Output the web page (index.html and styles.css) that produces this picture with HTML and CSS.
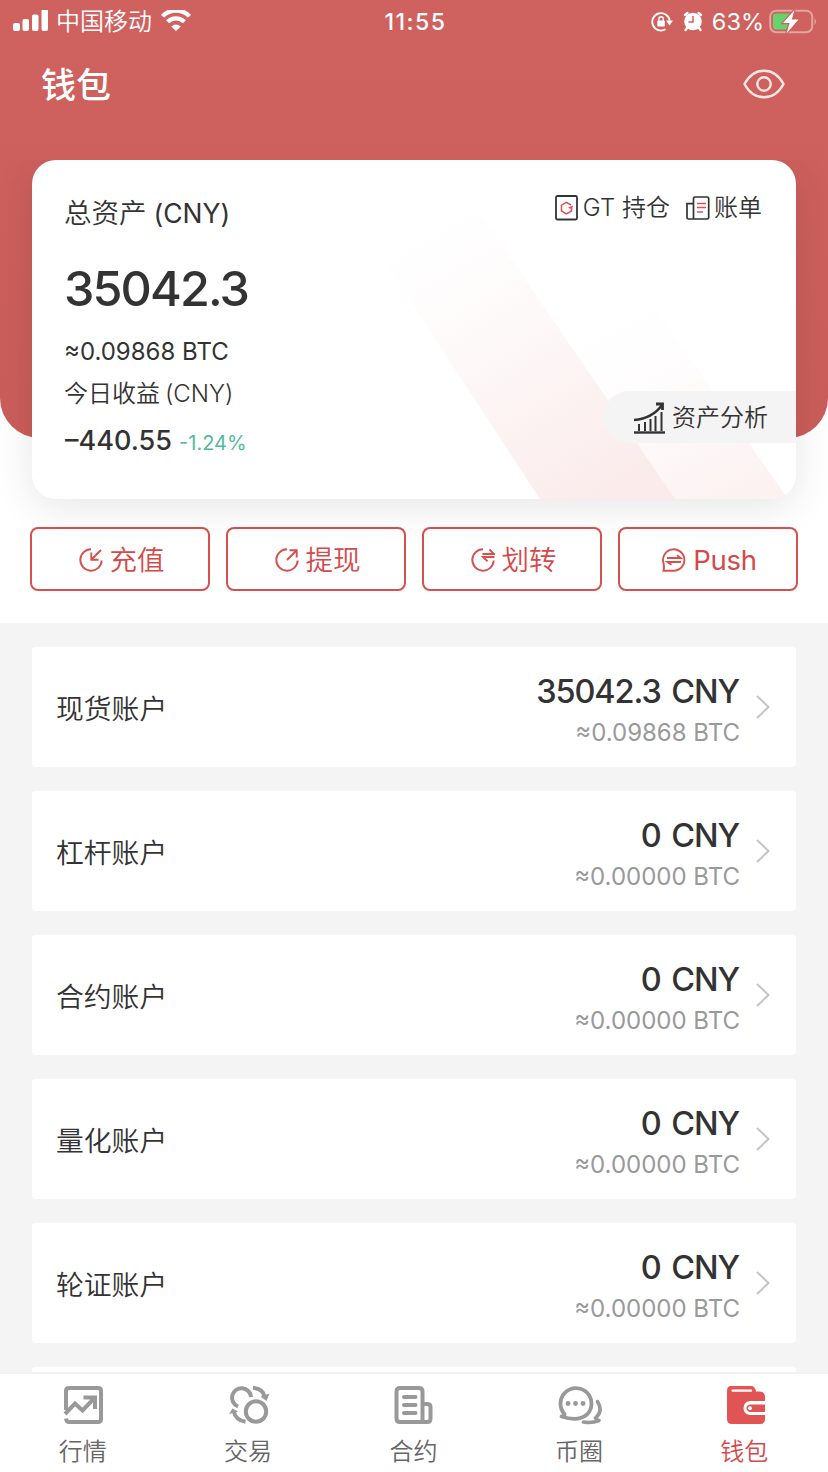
FILE: index.html
```html
<!DOCTYPE html>
<html lang="zh-CN">
<head>
  <meta charset="UTF-8">
  <meta name="viewport" content="width=device-width, initial-scale=1.0">
  <title>钱包</title>
  <link rel="stylesheet" href="styles.css">
</head>
<body>
  <header class="hero">
    <div class="status-bar">
      <div class="status-left">
        <svg width="35" height="23" viewBox="0 0 35 23" fill="#fff">
          <rect x="0" y="13" width="7" height="8" rx="2"/>
          <rect x="9.5" y="9" width="6.5" height="12" rx="2"/>
          <rect x="19" y="4.500" width="6.500" height="16.500" rx="2"/>
          <rect x="28.500" y="-1" width="6.500" height="22" rx="2"/>
        </svg>
        <span class="carrier">中国移动</span>
        <svg width="32" height="23" viewBox="0 0 32 23" fill="none" stroke="#fff" stroke-width="4.400">
          <path d="M2.500 6.200A19 19 0 0 1 29.500 6.200"/>
          <path d="M7.600 11.800A12 12 0 0 1 24.400 11.800"/>
          <path d="M16 21L11.200 16.500Q16 12.700 20.800 16.500Z" fill="#fff" stroke="none"/>
        </svg>
      </div>
      <div class="clock">11:55</div>
      <div class="status-right">
        <svg class="lock" width="22" height="22" viewBox="0 0 22 22" fill="none" stroke="#fff" stroke-width="1.900">
          <path d="M14.500 18.300A8.700 8.700 0 1 1 18.600 9.500"/>
          <path d="M15 9.500H22L18.500 14.500Z" fill="#fff" stroke="none"/>
          <rect x="6.300" y="9.500" width="7.600" height="6" rx="1" fill="#fff" stroke="none"/>
          <path d="M7.900 10V8a2.200 2.200 0 0 1 4.400 0v2" stroke-width="1.400"/>
        </svg>
        <svg class="alarm" width="20" height="21" viewBox="0 0 20 21">
          <circle cx="10" cy="10.500" r="8.800" fill="#fff"/>
          <path d="M2 4L4.500 2M18 4L15.500 2M4 17L2.500 19M16 17L17.500 19" stroke="#fff" stroke-width="2.400" stroke-linecap="round"/>
          <path d="M10 5V11H5.500" fill="none" stroke="#cf605d" stroke-width="1.500"/>
        </svg>
        <span class="percent">63%</span>
        <svg width="49" height="26" viewBox="0 0 49 26">
          <rect x="1.200" y="1.700" width="42" height="21.600" rx="6" fill="none" stroke="#e5a3a1" stroke-width="2"/>
          <path d="M45.500 9q3 3.500 0 7z" fill="#e5a3a1"/>
          <path d="M7 4.500H25L17 20.500H7Q4 20.500 4 17.500V7.500Q4 4.500 7 4.500Z" fill="#65d46c"/>
          <path d="M25.500 1L14 14H20.500L17.500 24.500L29.500 10.500H22.800Z" fill="#fff" stroke="#cf605d" stroke-width="2.400" paint-order="stroke"/>
        </svg>
      </div>
    </div>
    <div class="title-bar">
      <h1>钱包</h1>
      <svg width="42" height="30" viewBox="0 0 42 30" fill="none" stroke="#fbe6e4" stroke-width="2.400">
        <path d="M1.500 15C6 6.500 13 1.700 21 1.700S36 6.500 40.500 15C36 23.500 29 28.300 21 28.300S6 23.500 1.500 15Z"/>
        <circle cx="21" cy="15" r="6.700"/>
      </svg>
    </div>
  </header>

  <main>
    <section class="card">
      <svg class="card-stripes" width="764" height="339" viewBox="0 0 764 339">
        <defs>
          <linearGradient id="stripe-a" gradientUnits="userSpaceOnUse" x1="400" y1="60" x2="570" y2="339">
            <stop offset="0" stop-color="#e05a5a" stop-opacity="0"/>
            <stop offset=".3" stop-color="#e05a5a" stop-opacity=".025"/>
            <stop offset="1" stop-color="#dc5a5a" stop-opacity=".12"/>
          </linearGradient>
          <linearGradient id="stripe-b" gradientUnits="userSpaceOnUse" x1="590" y1="140" x2="700" y2="339">
            <stop offset="0" stop-color="#e05a5a" stop-opacity="0"/>
            <stop offset=".4" stop-color="#e05a5a" stop-opacity=".015"/>
            <stop offset="1" stop-color="#dc5a5a" stop-opacity=".08"/>
          </linearGradient>
        </defs>
        <path d="M508 339L320 52L430 26L643 339Z" fill="url(#stripe-a)"/>
        <path d="M643 339L500 129L600 115L756 339Z" fill="url(#stripe-b)"/>
      </svg>
      <div class="card-info">
        <div class="label">总资产<span>(CNY)</span></div>
        <div class="total">35042.3</div>
        <div class="btc">≈0.09868 BTC</div>
        <div class="today">今日收益<span>(CNY)</span></div>
        <div class="profit">–440.55 <span class="down">-1.24%</span></div>
      </div>
      <div class="card-side">
        <div class="links">
          <a class="link">
            <svg width="24" height="26" viewBox="0 0 24 26" fill="none">
              <rect x="1" y="1" width="21" height="23.500" rx="1.500" stroke="#333" stroke-width="1.800"/>
              <path d="M16 10L11.500 7.300L6.500 10.200V16L11.500 19L16.500 16V13" stroke="#e0525a" stroke-width="1.500"/>
              <path d="M13 12.500L18 10.500L17 14.500Z" fill="#e0525a"/>
            </svg>
            <span>GT 持仓</span>
          </a>
          <a class="link">
            <svg width="24" height="26" viewBox="0 0 24 26" fill="none">
              <path d="M7.500 24V4Q7.500 2 9 2H21Q22.700 2 22.700 4V22.500Q22.700 24 21 24H2.500Q1 24 1 22.500V8.700H7.500" stroke="#333" stroke-width="1.700"/>
              <path d="M11 8.500H20M11 12.500H20M11 17H17" stroke="#e0525a" stroke-width="1.700"/>
            </svg>
            <span>账单</span>
          </a>
        </div>
        <a class="analysis">
          <svg width="32" height="32" viewBox="0 0 32 32" fill="none" stroke="#333" stroke-width="2">
            <path d="M0 30.500H31" stroke-width="2.400"/>
            <path d="M5 29V22M11 29V20M16.500 29V17M21.500 29V14M27.500 29V10"/>
            <path d="M0 18C12 17 22 11.500 28 3" stroke-width="2.400"/>
            <path d="M22 2H28.500V8" stroke-width="2.800"/>
          </svg>
          <span>资产分析</span>
        </a>
      </div>
    </section>

    <nav class="actions">
      <a class="action">
        <svg width="24" height="24" viewBox="0 0 24 24">
          <path d="M12 1.300A10.700 10.700 0 1 0 22.700 12.500"/>
          <path d="M22 2L12.500 11.500M12.300 4.500V11.700H19.500"/>
        </svg>
        <span>充值</span>
      </a>
      <a class="action">
        <svg width="24" height="24" viewBox="0 0 24 24">
          <path d="M12 1.300A10.700 10.700 0 1 0 22.700 12.500"/>
          <path d="M12 12L21.500 2.500M14.500 2.300H21.700V9.500"/>
        </svg>
        <span>提现</span>
      </a>
      <a class="action">
        <svg width="24" height="24" viewBox="0 0 24 24">
          <path d="M12 1.300A10.700 10.700 0 1 0 22.700 12.500"/>
          <path d="M11.500 6H23L18.500 1.500M23.500 9H12L16.500 13.200"/>
        </svg>
        <span>划转</span>
      </a>
      <a class="action">
        <svg width="24" height="24" viewBox="0 0 24 24">
          <path d="M1.500 22.700Q2.500 19.500 1.600 15.500A10.700 10.700 0 1 1 12.500 22.700Z"/>
          <path d="M5 10H18.500L15 7.300M19 14H5.500L9.500 16.700"/>
        </svg>
        <span class="push">Push</span>
      </a>
    </nav>

    <section class="accounts">
      <div class="account">
        <span class="name">现货账户</span>
        <div class="amount"><b>35042.3 CNY</b><small>≈0.09868 BTC</small></div>
        <svg class="arrow" width="14" height="26" viewBox="0 0 14 26"><path d="M1 2L12.500 13L1 24"/></svg>
      </div>
      <div class="account">
        <span class="name">杠杆账户</span>
        <div class="amount"><b>0 CNY</b><small>≈0.00000 BTC</small></div>
        <svg class="arrow" width="14" height="26" viewBox="0 0 14 26"><path d="M1 2L12.500 13L1 24"/></svg>
      </div>
      <div class="account">
        <span class="name">合约账户</span>
        <div class="amount"><b>0 CNY</b><small>≈0.00000 BTC</small></div>
        <svg class="arrow" width="14" height="26" viewBox="0 0 14 26"><path d="M1 2L12.500 13L1 24"/></svg>
      </div>
      <div class="account">
        <span class="name">量化账户</span>
        <div class="amount"><b>0 CNY</b><small>≈0.00000 BTC</small></div>
        <svg class="arrow" width="14" height="26" viewBox="0 0 14 26"><path d="M1 2L12.500 13L1 24"/></svg>
      </div>
      <div class="account">
        <span class="name">轮证账户</span>
        <div class="amount"><b>0 CNY</b><small>≈0.00000 BTC</small></div>
        <svg class="arrow" width="14" height="26" viewBox="0 0 14 26"><path d="M1 2L12.500 13L1 24"/></svg>
      </div>
      <div class="account"></div>
    </section>
  </main>

  <footer class="tab-bar">
    <a class="tab">
      <svg width="46" height="42" viewBox="0 0 46 42">
        <path d="M6 26V7Q6 4 9 4H38Q41 4 41 7V35Q41 38 38 38H9Q6.500 38 6 34.500"/>
        <path d="M5 30L15 19.500L22.500 26.500L34 14.500M23.500 13.500H35V25"/>
      </svg>
      <span>行情</span>
    </a>
    <a class="tab">
      <svg width="46" height="42" viewBox="0 0 46 42">
        <path d="M26 13A9.500 9.500 0 1 0 13 22.500"/>
        <circle cx="31" cy="27.500" r="10.200"/>
        <path d="M28 3.800Q38 4.500 39.500 12.500M20.500 37.800Q10.500 36 9 28"/>
        <path d="M35.500 12.500L44.500 9.500L41.500 17ZM4 30L7.500 24.500L13 27.500Z" fill="#999" stroke="none"/>
      </svg>
      <span>交易</span>
    </a>
    <a class="tab">
      <svg width="46" height="42" viewBox="0 0 46 42">
        <path d="M32.500 38H10Q6.500 38 6.500 34.500V7.500Q6.500 4 10 4H29Q32.500 4 32.500 7.500V38H37Q40.500 38 40.500 34.500V23Q40.500 20 37 20H32.500"/>
        <path d="M14 13H25.500M14 21H25.500M14 29H25.500" stroke-linecap="round"/>
      </svg>
      <span>合约</span>
    </a>
    <a class="tab">
      <svg width="46" height="42" viewBox="0 0 46 42">
        <path d="M5.500 32.500Q9 32 8.500 30A15.500 15.500 0 1 1 31 30.500Q22 38 5.500 32.500Z" stroke-width="3.800" stroke-linejoin="round"/>
        <path d="M41.500 17.500Q47.500 27 39.500 34Q40.500 36 43 36.500Q36 39.500 27.500 38" stroke-width="3.600" stroke-linecap="round" stroke-linejoin="round"/>
        <path d="M12 19.500H12.100M19.500 19.500H19.600M27 19.500H27.100" stroke-width="4.800" stroke-linecap="round"/>
      </svg>
      <span>币圈</span>
    </a>
    <a class="tab active">
      <svg width="46" height="42" viewBox="0 0 46 42">
        <path d="M10 2H30Q34 2 35 7.500H39Q44 8 44 13V17H29Q22.500 18 22.500 24T29 31H44V35Q44 40 39 40H11Q6 40 6 35V7Q6 2 10 2Z" fill="#e05553" stroke="none"/>
        <path d="M11.500 6.700H30" stroke="#fff" stroke-width="2.200" stroke-linecap="round"/>
        <path d="M44 20.500H29Q25.500 21 25.500 24T29 28H44Z" fill="#e05553" stroke="none"/>
        <circle cx="29" cy="24.200" r="1.900" fill="#fff" stroke="none"/>
      </svg>
      <span>钱包</span>
    </a>
  </footer>
</body>
</html>
```
FILE: styles.css
```css
* {
  box-sizing: border-box;
}
body {
  margin: 0;
  height: 1472px;
  display: flex;
  flex-direction: column;
  overflow: hidden;
  background: #fff;
  color: #333;
  font-family: Inter, "Noto Sans CJK SC", sans-serif;
  font-weight: 350;
}
svg {
  display: block;
  flex: none;
}

.hero {
  flex: none;
  height: 438px;
  background: linear-gradient(#cf615e, #ca5d5a);
  border-radius: 0 0 40px 40px;
  color: #fff;
}
.status-bar {
  height: 42px;
  display: grid;
  grid-template-columns: 1fr auto 1fr;
  align-items: center;
  padding: 0 10px 0 13px;
  font-size: 24px;
  line-height: 42px;
}
.status-left,
.status-right {
  display: flex;
  align-items: center;
}
.status-left {
  gap: 8px;
}
.status-right {
  justify-content: flex-end;
}
.carrier {
  padding-top: 1px;
}
.clock {
  font-size: 23px;
  font-weight: 500;
  letter-spacing: 1.500px;
}
.lock {
  margin-right: 10px;
}
.alarm {
  margin-right: 9px;
}
.percent {
  font-size: 23.500px;
  font-weight: 400;
  margin-right: 5px;
}
.title-bar {
  height: 84px;
  padding: 0 43px 0 41px;
  display: flex;
  align-items: center;
  justify-content: space-between;
}
h1 {
  margin: 2px 0 0;
  font-size: 35px;
  font-weight: 500;
  line-height: 50px;
}

main {
  flex: 1;
  min-height: 0;
  margin-top: -278px;
  overflow: hidden;
}
.card {
  position: relative;
  display: flex;
  justify-content: space-between;
  height: 339px;
  margin: 0 32px;
  background: #fff;
  border-radius: 24px;
  box-shadow: 0 8px 40px rgba(0, 0, 0, .1);
}
.card-stripes {
  position: absolute;
  left: 0;
  top: 0;
  border-radius: 24px;
}
.card-info {
  position: relative;
  padding: 29px 0 0 32px;
}
.label {
  font-size: 27.500px;
  line-height: 48px;
}
.label span {
  font-size: 26.500px;
  font-weight: 400;
  margin-left: 7px;
}
.total {
  margin-top: 22px;
  font-size: 48.500px;
  font-weight: 500;
  line-height: 60px;
  letter-spacing: -1.900px;
}
.btc {
  margin-top: 12px;
  font-size: 24px;
  font-weight: 400;
  line-height: 42px;
}
.today {
  font-size: 24px;
  line-height: 42px;
}
.today span {
  margin-left: 5px;
}
.profit {
  font-size: 27px;
  font-weight: 500;
  line-height: 52px;
  margin-left: 1px;
}
.down {
  color: #53bb9b;
  font-size: 20px;
  font-weight: 400;
}
.card-side {
  position: relative;
  display: flex;
  flex-direction: column;
  align-items: flex-end;
  justify-content: space-between;
  padding: 28px 0 56px;
}
.links {
  display: flex;
  gap: 16px;
  padding-right: 34px;
}
.link {
  display: flex;
  align-items: center;
  gap: 4px;
  font-size: 24px;
  line-height: 40px;
}
.analysis {
  display: flex;
  align-items: center;
  gap: 6px;
  height: 52px;
  width: 193px;
  padding: 2px 0 0 31px;
  border-radius: 26px 0 0 26px;
  background: #f4f4f4;
  font-size: 24px;
  line-height: 40px;
}

.actions {
  display: grid;
  grid-template-columns: repeat(4, 1fr);
  gap: 16px;
  padding: 28px 30px 32px;
}
.action {
  height: 64px;
  display: flex;
  align-items: center;
  justify-content: center;
  gap: 7px;
  padding: 1px 0 0 3px;
  border: 2px solid #d6504e;
  border-radius: 8px;
  color: #d4494a;
  font-size: 27.500px;
  line-height: 40px;
}
.push {
  font-weight: 400;
  letter-spacing: -.3px;
}
.action svg {
  fill: none;
  stroke: #d6504e;
  stroke-width: 1.900;
}

.accounts {
  display: flex;
  flex-direction: column;
  gap: 24px;
  padding: 24px 32px;
  background: #f4f4f4;
}
.account {
  flex: none;
  display: flex;
  align-items: center;
  height: 120px;
  padding: 0 26px 0 24px;
  background: #fff;
  border-radius: 4px;
}
.name {
  flex: 1;
  font-size: 27.800px;
  padding-bottom: 1px;
}
.amount {
  text-align: right;
  margin-right: 16px;
  padding-top: 7px;
}
.amount b {
  display: block;
  font-size: 32.500px;
  font-weight: 500;
  line-height: 44px;
  letter-spacing: -1.100px;
  word-spacing: 3px;
  margin-right: 1px;
}
.amount small {
  display: block;
  color: #999;
  font-size: 24px;
  font-weight: 400;
  line-height: 38px;
}
.arrow path {
  fill: none;
  stroke: #c4c4c4;
  stroke-width: 2;
}

.tab-bar {
  flex: none;
  height: 100px;
  display: grid;
  grid-template-columns: repeat(5, 1fr);
  padding-right: 1px;
  border-top: 2px solid #f2f2f2;
  background: #fff;
}
.tab {
  display: flex;
  flex-direction: column;
  align-items: center;
  gap: 8px;
  padding-top: 10px;
  color: #666;
  font-size: 24px;
  line-height: 36px;
}
.tab svg {
  fill: none;
  stroke: #999;
  stroke-width: 4;
}
.tab.active {
  color: #d4494a;
}
```
